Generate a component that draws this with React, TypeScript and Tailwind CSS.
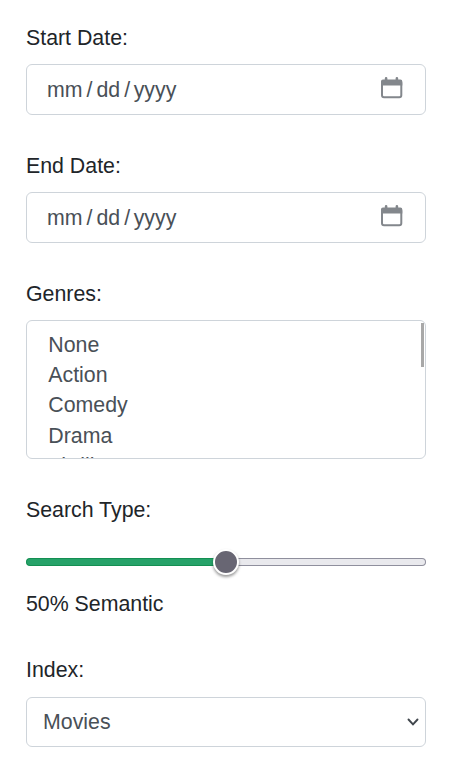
import React from "react";

function Label({ children }: { children: React.ReactNode }) {
  return <label className="block h-[33px] leading-[33px]">{children}</label>;
}

function DateField({ label }: { label: string }) {
  return (
    <div className="mb-[35px]">
      <Label>{label}</Label>
      <div className="mt-[9px] flex h-[51px] items-center justify-between rounded-[6px] border border-[#ced4da] pl-5 pr-[22px] text-[#495057]">
        <div className="flex pt-0.5">
          <span>mm</span>
          <span className="px-1">/</span>
          <span>dd</span>
          <span className="pl-1 pr-[3.5px]">/</span>
          <span>yyyy</span>
        </div>
        <svg width="23" height="22" viewBox="0 0 23 22" className="mb-[3px]" fill="none">
          <rect x="2" y="4" width="19.3" height="16.2" rx="2" stroke="#83878c" strokeWidth="2" />
          <path
            d="M3 2.6H4.8V1.4a1.3 1.3 0 0 1 2.6 0V2.6h8.2V1.4a1.3 1.3 0 0 1 2.6 0V2.6h2a2 2 0 0 1 2.1 2v3.9H1V4.6a2 2 0 0 1 2-2z"
            fill="#83878c"
          />
        </svg>
      </div>
    </div>
  );
}

const genres = ["None", "Action", "Comedy", "Drama", "Thriller"];

export default function App() {
  return (
    <main className="h-[765px] w-[460px] overflow-hidden bg-white pl-[26px] pr-[34px] pt-[22px] font-['Liberation_Sans',sans-serif] text-[21.34px] text-[#212529]">
      <DateField label="Start Date:" />
      <DateField label="End Date:" />

      <Label>Genres:</Label>
      <div className="mb-[35px] mt-[9px] flex h-[139px] justify-between overflow-hidden rounded-[6px] border border-[#ced4da] pl-[21.3px] pt-[8.75px] text-[#495057]">
        <ul>
          {genres.map((g) => (
            <li key={g} className="h-[30.3px] leading-[30px]">
              {g}
            </li>
          ))}
        </ul>
        <div className="-mt-[6.75px] mr-px h-[44px] w-[3px] bg-[#a8a8a8]" />
      </div>

      <Label>Search Type:</Label>
      <div className="mt-[31px] flex h-2 items-center justify-center">
        <div className="h-2 flex-1 rounded-l-[4px] border border-r-0 border-[#148f52] bg-[#26a269]" />
        <div className="z-10 -mx-[13px] size-[26px] shrink-0 rounded-full border-2 border-white bg-[#686673] shadow-[0_2px_3px_rgba(0,0,0,0.4)]" />
        <div className="h-2 flex-1 rounded-r-[4px] border border-l-0 border-[#8f8f9d] bg-[#e9e9ed]" />
      </div>
      <div className="mb-[33px] mt-[22px] h-[33px] leading-[33px]">50% Semantic</div>

      <Label>Index:</Label>
      <div className="mt-[10px] flex h-[50px] items-center justify-between rounded-[6px] border border-[#ced4da] pl-4 pr-[6px] text-[#495057]">
        <span className="pt-px">Movies</span>
        <svg width="12" height="8" viewBox="0 0 12 8" fill="none">
          <path d="M1.5 1.5L6 6.3L10.5 1.5" stroke="#40464c" strokeWidth="1.9" strokeLinecap="round" />
        </svg>
      </div>
    </main>
  );
}
